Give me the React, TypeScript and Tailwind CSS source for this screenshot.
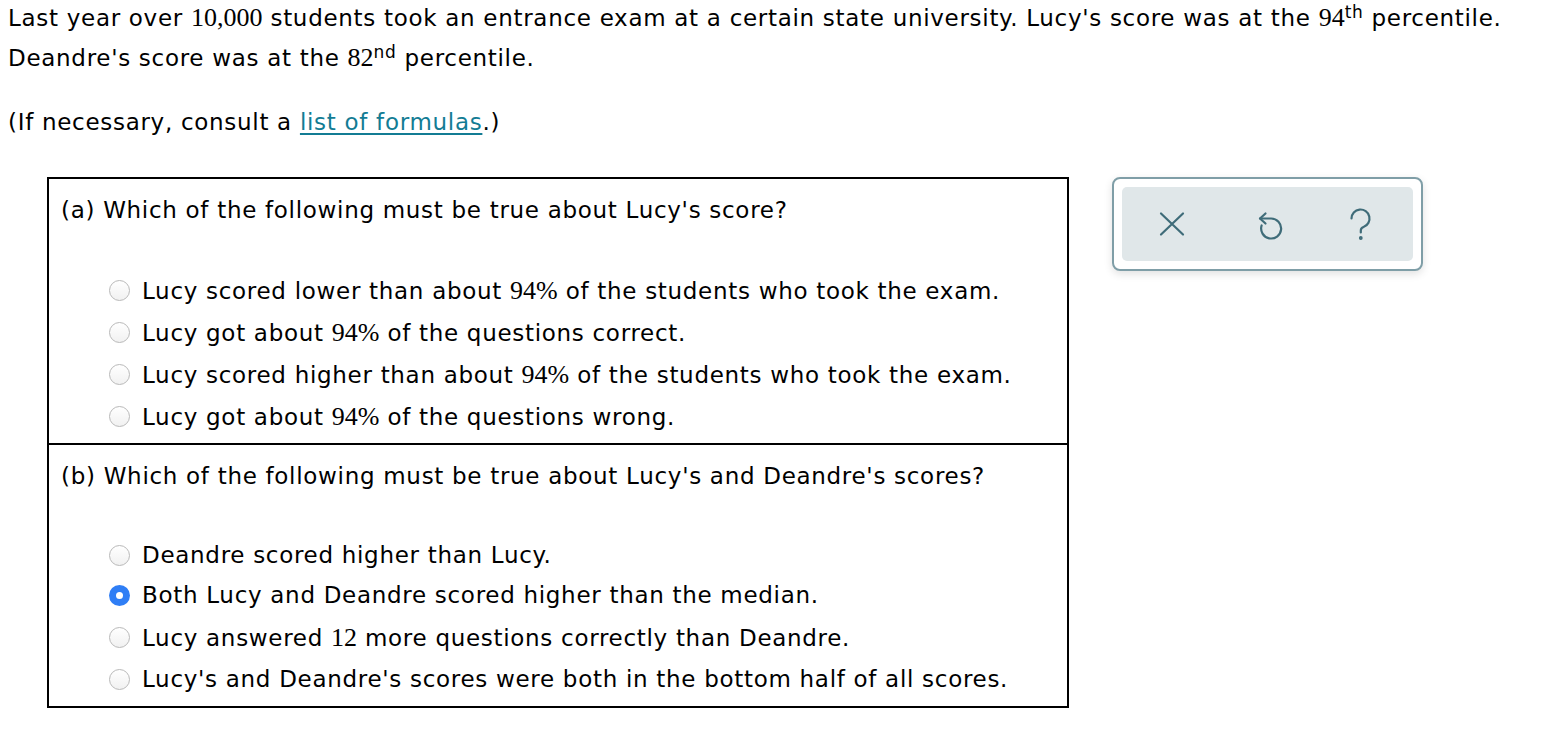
import React from 'react';

const Num: React.FC<{ children: React.ReactNode }> = ({ children }) => (
  <span className="font-[family-name:'Liberation_Serif',serif] text-[26px] tracking-normal">{children}</span>
);

const Radio: React.FC<{ checked?: boolean }> = ({ checked }) =>
  checked ? (
    <span className="w-[21px] h-[21px] rounded-full bg-[#2f7ef5] flex items-center justify-center shrink-0">
      <span className="w-[7px] h-[7px] rounded-full bg-white" />
    </span>
  ) : (
    <span className="w-[21px] h-[21px] rounded-full border border-[#b9b9b9] bg-gradient-to-b from-white to-[#f1f1f1] shrink-0" />
  );

const Option: React.FC<{ checked?: boolean; children: React.ReactNode; h: string }> = ({ checked, children, h }) => (
  <div className={`flex items-center gap-[12px] pl-[60px] ${h}`}>
    <Radio checked={checked} />
    <span>{children}</span>
  </div>
);

export default function App() {
  return (
    <div className="bg-white min-h-screen text-black text-[23px] tracking-[0.7px] font-[family-name:'DejaVu_Sans','Verdana',sans-serif] pl-[8px]">
      <p className="leading-[40px] -mt-[2px] whitespace-nowrap">
        Last year over <Num>10,000</Num> students took an entrance exam at a certain state university. Lucy's score was at the{' '}
        <Num>94</Num>
        <sup className="text-[17px]">th</sup> percentile.
        <br />
        Deandre's score was at the <Num>82</Num>
        <sup className="text-[17px]">nd</sup> percentile.
      </p>
      <p className="leading-[36px] mt-[26px]">
        (If necessary, consult a{' '}
        <a href="#" className="text-[#137c94] underline underline-offset-[3px]">
          list of formulas
        </a>
        .)
      </p>

      <div className="flex items-start gap-[43px] mt-[37px] ml-[39px]">
        <div className="w-[1022px] shrink-0 border-2 border-black">
          <div className="pt-[16px] pb-[6px] px-[12px]">
            <div className="leading-[30px]">(a) Which of the following must be true about Lucy's score?</div>
            <div className="mt-[44px] -ml-[12px]">
              <Option h="h-[42px]">
                Lucy scored lower than about <Num>94%</Num> of the students who took the exam.
              </Option>
              <Option h="h-[42px]">
                Lucy got about <Num>94%</Num> of the questions correct.
              </Option>
              <Option h="h-[42px]">
                Lucy scored higher than about <Num>94%</Num> of the students who took the exam.
              </Option>
              <Option h="h-[42px]">
                Lucy got about <Num>94%</Num> of the questions wrong.
              </Option>
            </div>
          </div>
          <div className="border-t-2 border-black pt-[16px] pb-[7px] px-[12px]">
            <div className="leading-[30px]">(b) Which of the following must be true about Lucy's and Deandre's scores?</div>
            <div className="mt-[44px] -ml-[12px]">
              <Option h="h-[40px]">Deandre scored higher than Lucy.</Option>
              <Option h="h-[41px]" checked>
                Both Lucy and Deandre scored higher than the median.
              </Option>
              <Option h="h-[43px]">
                Lucy answered <Num>12</Num> more questions correctly than Deandre.
              </Option>
              <Option h="h-[40px]">Lucy's and Deandre's scores were both in the bottom half of all scores.</Option>
            </div>
          </div>
        </div>

        <div className="w-[311px] h-[94px] shrink-0 rounded-[8px] border-2 border-[#7f9ea7] bg-white p-[8px] shadow-[0_3px_8px_rgba(0,0,0,0.12)]">
          <div className="h-full rounded-[5px] bg-[#e0e7e9] flex items-center justify-between pl-[30px] pr-[29px] text-[#3f6c79]">
            <svg width="40" height="40" viewBox="0 0 40 40" fill="none" stroke="currentColor" strokeWidth="2.2" strokeLinecap="round">
              <path d="M9 9.5 L31 30.5 M31 9.5 L9 30.5" />
            </svg>
            <svg width="40" height="40" viewBox="0 0 40 40" fill="none" stroke="currentColor" strokeWidth="2.2" strokeLinecap="round" strokeLinejoin="round">
              <path d="M17.5 9.5 L12 14.5 L17.5 19.5" />
              <path d="M12 14.5 L23 14.5 A10 10 0 1 1 13.6 21.5" />
            </svg>
            <svg width="40" height="40" viewBox="0 0 40 40" fill="none" stroke="currentColor" strokeWidth="2.2" strokeLinecap="round">
              <path d="M7.5 14.5 A9 9 0 1 1 19.5 23 C17.5 23.8 16.8 25 16.8 26.5 L16.8 28.5" />
              <circle cx="16.8" cy="34" r="0.8" fill="currentColor" />
            </svg>
          </div>
        </div>
      </div>
    </div>
  );
}
